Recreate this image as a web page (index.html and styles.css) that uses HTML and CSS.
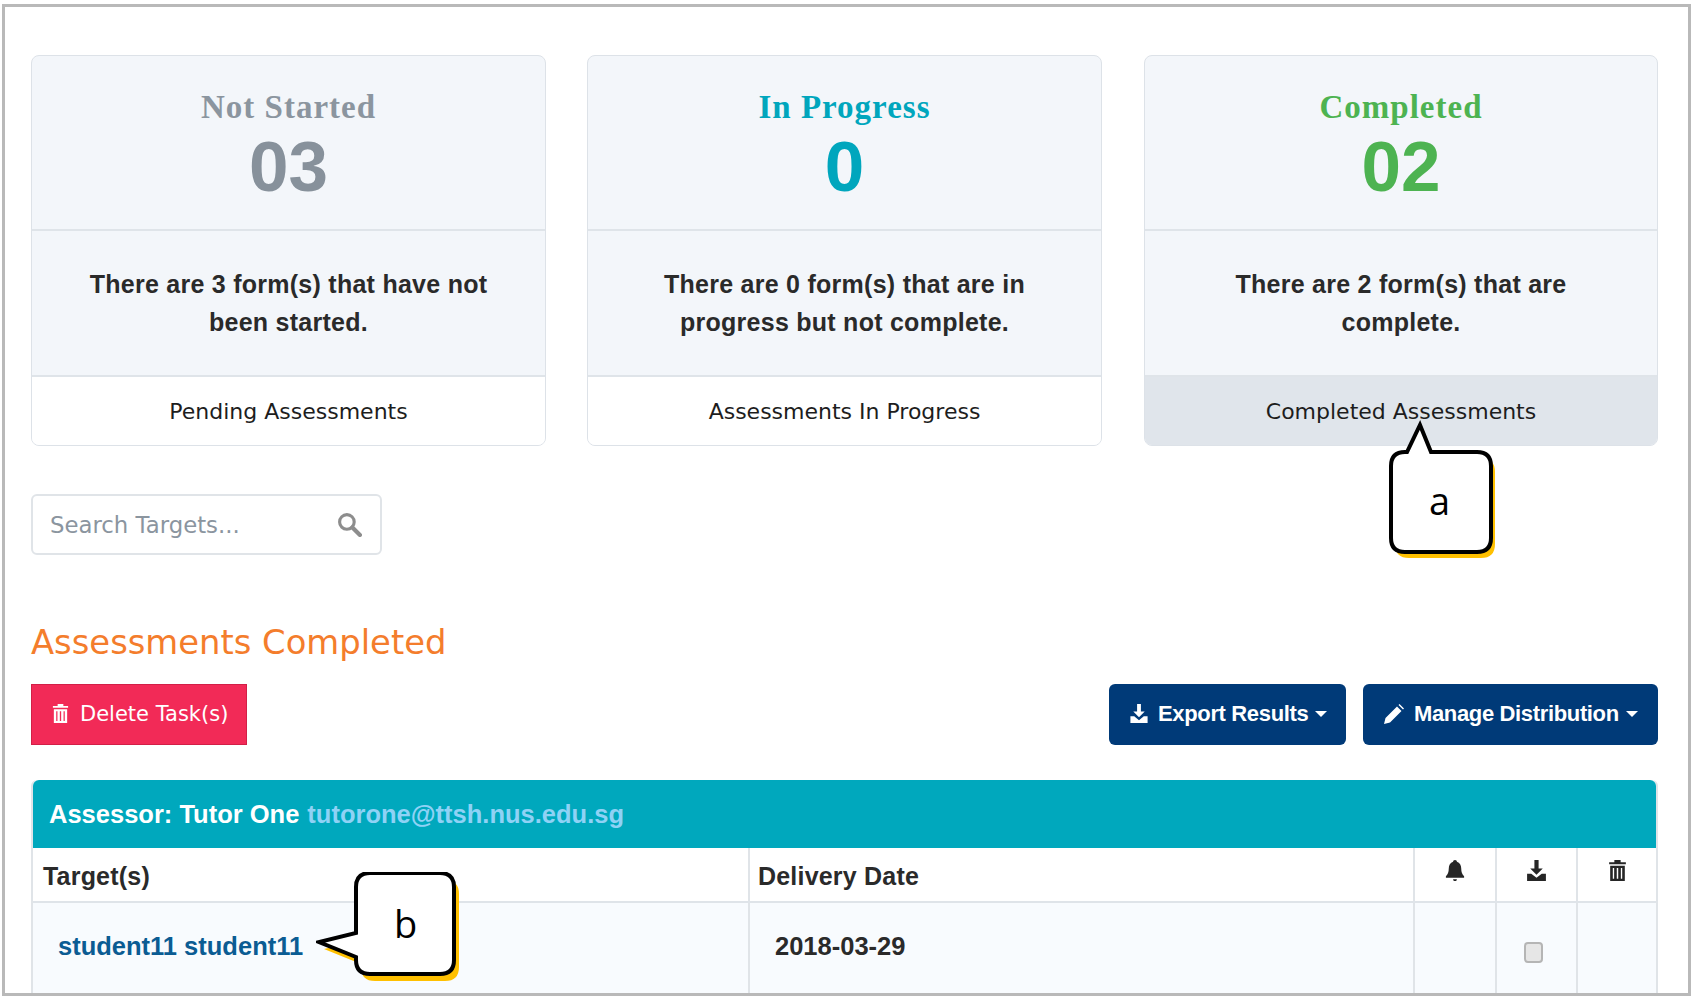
FILE: index.html
```html
<!DOCTYPE html>
<html lang="en">
<head>
    <meta charset="UTF-8">
    <title>Assessments</title>
    <link rel="stylesheet" href="styles.css">
</head>

<body>
    <div class="frame">
        <div class="cards">
            <div class="card">
                <div class="card-head">
                    <h2 class="grey">Not Started</h2>
                    <div class="count grey-num">03</div>
                </div>
                <div class="card-body">There are 3 form(s) that have not<br>been started.</div>
                <div class="card-foot">Pending Assessments</div>
            </div>
            <div class="card">
                <div class="card-head">
                    <h2 class="teal">In Progress</h2>
                    <div class="count teal">0</div>
                </div>
                <div class="card-body">There are 0 form(s) that are in<br>progress but not complete.</div>
                <div class="card-foot">Assessments In Progress</div>
            </div>
            <div class="card">
                <div class="card-head">
                    <h2 class="green">Completed</h2>
                    <div class="count green">02</div>
                </div>
                <div class="card-body">There are 2 form(s) that are<br>complete.</div>
                <div class="card-foot active">Completed Assessments</div>
            </div>
        </div>

        <div class="search">
            <span class="search-text">Search Targets...</span>
            <svg class="search-icon" viewBox="0 0 24 24" width="25" height="25">
                <circle cx="9.5" cy="9.5" r="7" fill="none" stroke="#8d8d8d" stroke-width="3"/>
                <path d="M14.8 14.8 L22 22" stroke="#8d8d8d" stroke-width="4" stroke-linecap="round"/>
            </svg>
        </div>

        <h3 class="section-title">Assessments Completed</h3>

        <div class="toolbar">
            <button class="btn btn-red">
                <svg viewBox="0 0 20 22" width="19" height="21">
                    <path d="M7 1h6v2h5v2H2V3h5z M3 6.500h14V21H3z M5.500 8.500v10.500h1.300V8.500z M9.300 8.500v10.500h1.400V8.500z M13.200 8.500v10.500h1.300V8.500z" fill="#fff" fill-rule="evenodd"/>
                </svg>
                Delete Task(s)
            </button>
            <div class="toolbar-right">
                <button class="btn btn-blue btn-export">
                    <svg viewBox="0 0 20 22" width="20" height="21">
                        <path d="M8 1h4v8h4l-6 6-6-6h4z M1 14h4l5 4 5-4h4v7H1z" fill="#fff"/>
                    </svg>
                    Export Results <span class="caret"></span>
                </button>
                <button class="btn btn-blue btn-manage">
                    <svg viewBox="0 0 22 22" width="22" height="22">
                        <path d="M1 21l1.500-6L14 3.500l4.500 4.500L7 19.500z M15.500 2l1-1 4.500 4.500-1 1z" fill="#fff"/>
                    </svg>
                    Manage Distribution <span class="caret"></span>
                </button>
            </div>
        </div>

        <div class="panel">
            <div class="panel-head">
                Assessor: Tutor One <a class="email">tutorone@ttsh.nus.edu.sg</a>
            </div>
            <table class="targets">
                <thead>
                    <tr>
                        <th class="col-target">Target(s)</th>
                        <th class="col-date">Delivery Date</th>
                        <th class="col-icon col-bell">
                            <svg viewBox="0 0 20 24" width="20" height="23">
                                <path d="M10 1c1.200 0 2 .8 2 1.800C15 3.800 16.500 6.500 16.500 10c0 4 1 6 3 8v1.500H.5V18c2-2 3-4 3-8 0-3.500 1.500-6.200 4.500-7.200C8 1.800 8.800 1 10 1z M8 21h4c0 1.200-.9 2-2 2s-2-.8-2-2z" fill="#262626"/>
                            </svg>
                        </th>
                        <th class="col-icon col-down">
                            <svg viewBox="0 0 20 22" width="21" height="23">
                                <path d="M8 1h4v8h4l-6 6-6-6h4z M1 14h4l5 4 5-4h4v7H1z" fill="#262626"/>
                            </svg>
                        </th>
                        <th class="col-icon col-trash">
                            <svg viewBox="0 0 20 22" width="21" height="23">
                                <path d="M7 1h6v2h5v2H2V3h5z M3 6.500h14V21H3z M5.500 8.500v10.500h1.300V8.500z M9.300 8.500v10.500h1.400V8.500z M13.200 8.500v10.500h1.300V8.500z" fill="#262626" fill-rule="evenodd"/>
                            </svg>
                        </th>
                    </tr>
                </thead>
                <tbody>
                    <tr>
                        <td class="student">student11 student11</td>
                        <td class="date">2018-03-29</td>
                        <td></td>
                        <td class="check-cell"><span class="check"></span></td>
                        <td></td>
                    </tr>
                </tbody>
            </table>
        </div>

        <!-- Callouts over the screenshot -->
        <div class="callout callout-a">
            <svg viewBox="0 0 112 150" width="112" height="150">
                <path d="M17 35 H19 L32 8 L43 35 H89 Q103 35 103 49 V121 Q103 135 89 135 H17 Q3 135 3 121 V49 Q3 35 17 35 Z" transform="translate(4 6)" fill="#ffc000"/>
                <path d="M17 35 H19 L32 8 L43 35 H89 Q103 35 103 49 V121 Q103 135 89 135 H17 Q3 135 3 121 V49 Q3 35 17 35 Z" fill="#fff" stroke="#000" stroke-width="4"/>
            </svg>
            <span class="callout-label label-a">a</span>
        </div>
        <div class="callout callout-b">
            <svg viewBox="0 0 148 115" width="148" height="115">
                <path d="M54 1 H124 Q138 1 138 15 V88 Q138 102 124 102 H54 Q40 102 40 88 V85 L3 70 L40 61 V15 Q40 1 54 1 Z" transform="translate(5 7)" fill="#ffc000"/>
                <path d="M54 1 H124 Q138 1 138 15 V88 Q138 102 124 102 H54 Q40 102 40 88 V85 L3 70 L40 61 V15 Q40 1 54 1 Z" fill="#fff" stroke="#000" stroke-width="4"/>
            </svg>
            <span class="callout-label label-b">b</span>
        </div>
    </div>
</body>
</html>
```

FILE: styles.css
```css
body {
    margin: 0;
    background-color: #fff;
    font-family: "Liberation Sans", Arial, sans-serif;
    color: #222;
}

.frame {
    position: relative;
    box-sizing: border-box;
    width: 1689px;
    height: 992px;
    margin: 4px 0 0 2px;
    padding: 48px 30px 0 26px;
    border: 3px solid #b9b9b9;
    overflow: hidden;
}

.cards {
    display: grid;
    grid-template-columns: 515px 515px 1fr;
    column-gap: 41px;
}

.card {
    box-sizing: border-box;
    height: 391px;
    display: flex;
    flex-direction: column;
    border: 1px solid #dde2e8;
    border-radius: 8px;
    background-color: #f3f6fa;
    text-align: center;
    overflow: hidden;
}

.card:last-child {
    margin-left: 1px;
}

.card-head {
    height: 175px;
    padding-top: 33px;
    box-sizing: border-box;
    border-bottom: 2px solid #dfe4e9;
}

.card-head h2 {
    margin: 0;
    font-family: "Liberation Serif", serif;
    font-size: 33px;
    line-height: 36px;
    letter-spacing: 1px;
}

.count {
    margin-top: 8px;
    font-size: 71px;
    font-weight: bold;
    line-height: 68px;
}

.grey { color: #8b959f; }
.grey-num { color: #87919b; }
.teal { color: #00a6bd; }
.green { color: #4db351; }

.card-body {
    height: 146px;
    box-sizing: border-box;
    padding-top: 34px;
    font-size: 25px;
    font-weight: bold;
    line-height: 38px;
    letter-spacing: 0.26px;
    color: #2a2a2a;
    border-bottom: 2px solid #dfe4e9;
}

.card-foot {
    flex: 1;
    display: flex;
    align-items: center;
    justify-content: center;
    background-color: #fff;
    font-family: "DejaVu Sans", sans-serif;
    font-size: 22px;
    color: #1d1d1d;
}

.card-foot.active {
    background-color: #e0e5eb;
}

.search {
    box-sizing: border-box;
    width: 351px;
    height: 61px;
    margin-top: 48px;
    padding: 0 18px 0 17px;
    display: flex;
    align-items: center;
    justify-content: space-between;
    border: 2px solid #e0e4e8;
    border-radius: 6px;
    font-family: "DejaVu Sans", sans-serif;
    font-size: 22.8px;
    color: #8b959f;
}

.section-title {
    margin: 66px 0 0;
    font-family: "DejaVu Sans", sans-serif;
    font-size: 33.8px;
    font-weight: normal;
    line-height: 44px;
    color: #f47d2c;
}

.toolbar {
    display: flex;
    justify-content: space-between;
    margin-top: 19px;
}

.toolbar-right {
    display: flex;
    gap: 17px;
}

.btn {
    box-sizing: border-box;
    display: flex;
    align-items: center;
    gap: 9px;
    height: 61px;
    padding: 0 0 2px 19px;
    border: 1px solid transparent;
    color: #fff;
    font-family: "DejaVu Sans", sans-serif;
    font-size: 21px;
    font-weight: normal;
    white-space: nowrap;
}

.btn svg {
    flex-shrink: 0;
}

.btn-red {
    width: 216px;
    gap: 10px;
    background-color: #f22a57;
    border-color: #d21f47;
}

.btn-blue {
    background-color: #003a78;
    border-radius: 6px;
    font-family: "Liberation Sans", sans-serif;
    font-size: 22px;
    letter-spacing: -0.35px;
    font-weight: bold;
}

.btn-export {
    width: 237px;
}

.btn-manage {
    width: 295px;
}

.caret {
    display: inline-block;
    width: 0;
    height: 0;
    margin-left: -2px;
    border-top: 6px solid #fff;
    border-left: 6px solid transparent;
    border-right: 6px solid transparent;
}

.panel {
    margin-top: 35px;
    border: 2px solid #e0e4e8;
    border-top: none;
    border-bottom: none;
    border-radius: 6px 6px 0 0;
}

.panel-head {
    height: 68px;
    padding-left: 16px;
    box-sizing: border-box;
    display: flex;
    align-items: center;
    gap: 8px;
    background-color: #00a8bd;
    border-radius: 6px 6px 0 0;
    color: #fff;
    font-size: 25.5px;
    font-weight: bold;
}

.email {
    color: #8fd2f5;
}

.targets {
    width: 100%;
    border-collapse: collapse;
    table-layout: fixed;
}

.targets th {
    height: 50px;
    padding: 3px 0 0;
    text-align: left;
    font-size: 25px;
    letter-spacing: 0.2px;
    border-bottom: 2px solid #dfe4e9;
    border-left: 2px solid #e0e4e8;
    color: #2a2a2a;
}

.targets th:first-child {
    border-left: none;
}

.targets td {
    box-sizing: border-box;
    height: 92px;
    padding: 28px 0 0 25px;
    vertical-align: top;
    background-color: #f8fbfe;
    border-left: 2px solid #e0e4e8;
    font-size: 25.5px;
    line-height: 30px;
    font-weight: bold;
}

.targets td:first-child {
    border-left: none;
}

.targets .col-target {
    width: 705px;
    padding-left: 10px;
}

.targets .col-date {
    padding-left: 8px;
}

.targets .col-icon {
    height: 51px;
    padding: 0 0 2px;
    text-align: center;
}

.targets .col-bell { width: 80px; }
.targets .col-down { width: 79px; }
.targets .col-trash { width: 78px; }

.targets .student {
    padding-left: 25px;
    color: #0b5c93;
}

.date {
    color: #2a2a2a;
}

.targets .check-cell {
    padding: 36px 0 0;
    text-align: center;
}

.check {
    display: inline-block;
    box-sizing: border-box;
    width: 19px;
    height: 21px;
    margin-right: 7px;
    background-color: #e6e6e6;
    border: 2px solid #b5b5b5;
    border-radius: 4px;
}

.callout {
    position: absolute;
}

.callout svg {
    display: block;
}

.callout-a {
    left: 1383px;
    top: 410px;
}

.callout-b {
    left: 311px;
    top: 865px;
}

.callout-label {
    position: absolute;
    font-family: "Open Sans", sans-serif;
    font-size: 38px;
    line-height: 44px;
    color: #000;
}

.label-a {
    left: 41px;
    top: 61px;
}

.label-b {
    left: 78px;
    top: 29px;
}
```
